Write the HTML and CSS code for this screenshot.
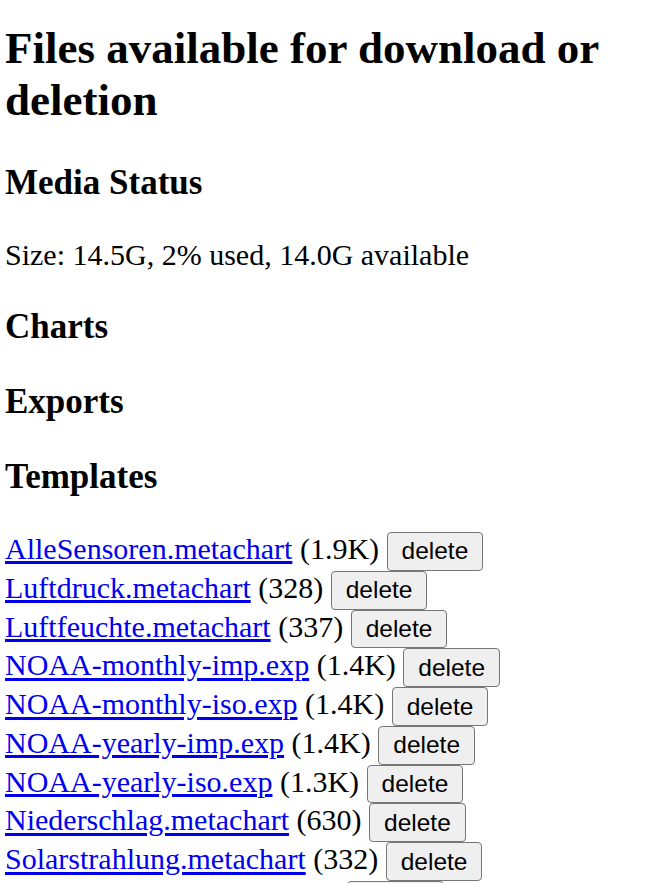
FILE: index.html
```html
<!DOCTYPE html>
<html lang="en">
<head>
  <meta charset="UTF-8" />
  <meta name="viewport" content="width=device-width, initial-scale=1.0"/>
  <title>Files</title>
  <link rel="stylesheet" href="styles.css">
</head>
<body>
  <h2 class="page-title">Files available for download or deletion</h2>

  <h3>Media Status</h3>
  <p>Size: 14.5G, 2% used, 14.0G available</p>

  <h3>Charts</h3>

  <h3>Exports</h3>

  <h3>Templates</h3>
  <div class="file-list">
    <a href="#">AlleSensoren.metachart</a> (1.9K) <button class="del-btn">delete</button><br>
    <a href="#">Luftdruck.metachart</a> (328) <button class="del-btn">delete</button><br>
    <a href="#">Luftfeuchte.metachart</a> (337) <button class="del-btn">delete</button><br>
    <a href="#">NOAA-monthly-imp.exp</a> (1.4K) <button class="del-btn">delete</button><br>
    <a href="#">NOAA-monthly-iso.exp</a> (1.4K) <button class="del-btn">delete</button><br>
    <a href="#">NOAA-yearly-imp.exp</a> (1.4K) <button class="del-btn">delete</button><br>
    <a href="#">NOAA-yearly-iso.exp</a> (1.3K) <button class="del-btn">delete</button><br>
    <a href="#">Niederschlag.metachart</a> (630) <button class="del-btn">delete</button><br>
    <a href="#">Solarstrahlung.metachart</a> (332) <button class="del-btn">delete</button><br>
    <a href="#">Temperatur.metachart</a> (334) <button class="del-btn">delete</button><br>
  </div>
</body>
</html>
```

FILE: styles.css
```css
body {
  font-family: "Liberation Serif", "Times New Roman", serif;
  font-size: 30px;
  color: #000;
  background: #fff;
  margin: 0 5px;
}

h2 {
  font-size: 45px;
  font-weight: bold;
  margin: 22px 0 37px 0;
}

h3 {
  font-size: 35px;
  font-weight: bold;
  margin: 35px 0;
}

p {
  margin: 30px 0;
}

a {
  color: #0000ee;
  text-decoration: underline;
}

.file-list {
  margin-top: 1px;
}

.del-btn {
  font-family: "Liberation Sans", Arial, sans-serif;
  font-size: 24.5px;
  color: #000;
  background: #efefef;
  border: 1px solid #767676;
  border-radius: 4px;
  padding: 4.4px 14px;
  margin: 0;
  cursor: pointer;
}

.del-btn:hover {
  background: #e5e5e5;
}
```
